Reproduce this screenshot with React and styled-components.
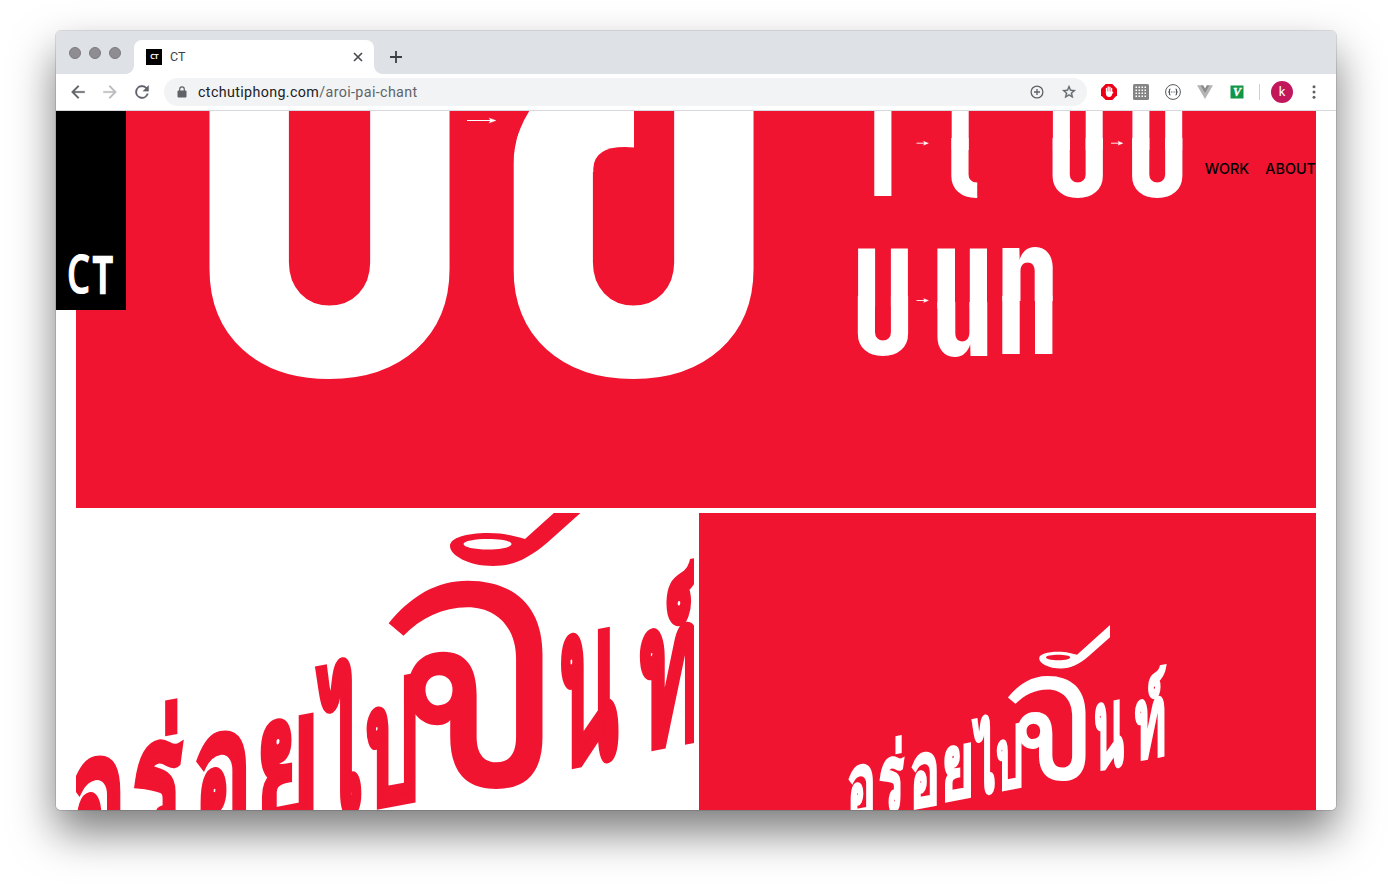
import React from "react";
import styled, { createGlobalStyle } from "styled-components";

const RED = "#f01431";

const GlobalStyle = createGlobalStyle`
  * { box-sizing: border-box; }
  html, body { margin: 0; padding: 0; background: #fff; }
  body { overflow: hidden; font-family: Roboto, "Liberation Sans", sans-serif; }
  svg { display: block; flex: none; }
`;

const Desktop = styled.div`
  width: 1392px;
  height: 890px;
  padding: 31px 56px 80px;
  background: #fff;
  overflow: hidden;
`;

const Window = styled.div`
  display: flex;
  flex-direction: column;
  height: 779px;
  border-radius: 5px;
  box-shadow: 0 0 0 1px rgba(0, 0, 0, 0.12), 0 22px 44px rgba(0, 0, 0, 0.52);
`;

const TabStrip = styled.div`
  display: flex;
  height: 43px;
  padding: 9px 0 0 13px;
  background: #dee1e6;
  border-radius: 5px 5px 0 0;
`;

const Lights = styled.div`
  display: flex;
  gap: 8px;
  width: 57px;
  padding-top: 7px;
`;

const Light = styled.span`
  width: 12px;
  height: 12px;
  border-radius: 50%;
  background: #8f8d92;
  border: 1px solid #7c7a7f;
`;

const TabCurve = styled.span`
  align-self: flex-end;
  width: 8px;
  height: 8px;
  background: radial-gradient(circle at ${(p) => (p.$right ? "100%" : "0")} 0, transparent 7.5px, #fff 8px);
`;

const Tab = styled.div`
  display: flex;
  align-items: center;
  width: 240px;
  height: 34px;
  padding: 0 10px 0 12px;
  border-radius: 8px 8px 0 0;
  background: #fff;
`;

const Favicon = styled.span`
  width: 16px;
  height: 16px;
  margin-right: 8px;
  background: #000;
  color: #eee;
  font: 700 7px/16px "Liberation Sans Narrow", "DejaVu Sans Condensed", sans-serif;
  letter-spacing: -0.6px;
  text-align: center;
`;

const TabTitle = styled.span`
  flex: 1;
  color: #3c4043;
  font-size: 12.5px;
  line-height: 16px;
`;

const NewTab = styled.div`
  padding: 10px 0 0 7px;
`;

const Toolbar = styled.div`
  display: flex;
  align-items: center;
  height: 37px;
  padding: 0 12px 0 12px;
  background: #fff;
  border-bottom: 1px solid #d7d9dc;
`;

const NavButtons = styled.div`
  display: flex;
  gap: 12px;
  width: 96px;
`;

const AddressBar = styled.div`
  display: flex;
  align-items: center;
  width: 923px;
  height: 28px;
  padding: 0 10px 0 12px;
  border-radius: 14px;
  background: #f1f3f4;
`;

const Url = styled.span`
  flex: 1;
  margin-left: 10px;
  font-size: 14.3px;
  line-height: 20px;
  letter-spacing: 0.36px;
  color: #202124;
`;

const UrlPath = styled.span`
  color: #5f6368;
`;

const PageActions = styled.div`
  display: flex;
  gap: 16px;
`;

const Extensions = styled.div`
  display: flex;
  align-items: center;
  gap: 16px;
  margin-left: 14px;
`;

const Divider = styled.span`
  width: 1px;
  height: 16px;
  margin-left: -2px;
  background: #cdd0d4;
`;

const Avatar = styled.span`
  width: 22px;
  height: 22px;
  margin: 0 -5px 0 -5px;
  border-radius: 50%;
  background: #c2185b;
  color: #fff;
  font-size: 13px;
  line-height: 22px;
  text-align: center;
`;

const Viewport = styled.main`
  position: relative;
  display: flex;
  flex-direction: column;
  gap: 5px;
  height: 699px;
  padding: 0 20px;
  background: #fff;
  border-radius: 0 0 5px 5px;
  overflow: hidden;
`;

const Panel = styled.section`
  width: ${(p) => p.$w}px;
  height: ${(p) => p.$h}px;
  background: ${(p) => p.$bg};
  overflow: hidden;
`;

const Gallery = styled.div`
  display: flex;
  justify-content: space-between;
`;

const SiteLogo = styled.a`
  position: absolute;
  left: 0;
  top: 0;
  width: 70px;
  height: 199px;
  background: #000;
`;

const SiteNav = styled.nav`
  position: absolute;
  right: 20px;
  top: 48px;
  display: flex;
  gap: 16px;
`;

const SiteLink = styled.a`
  color: #000;
  font: 500 14.4px/20px Inter, "Liberation Sans", sans-serif;
`;

/* Measures the ink of a string, so that it can be set to an exact box. */
const ctx = document.createElement("canvas").getContext("2d");
function inkOf(text, font, weight) {
  ctx.font = `${weight} 200px ${font}`;
  const m = ctx.measureText(text);
  return {
    left: m.actualBoundingBoxLeft,
    up: m.actualBoundingBoxAscent,
    w: m.actualBoundingBoxLeft + m.actualBoundingBoxRight,
    h: m.actualBoundingBoxAscent + m.actualBoundingBoxDescent,
  };
}

function Letter({ text, x, y, w, h, bold = 0, slope = 0, fill = "#fff", font = "Inter, sans-serif", weight = 900, clipPath }) {
  const ink = inkOf(text, font, weight);
  const sx = (w - bold) / ink.w;
  const sy = (h - bold) / ink.h;
  return (
    <g clipPath={clipPath}>
      <text
        x={ink.left}
        y={ink.up}
        transform={`matrix(${sx} ${slope * sx} 0 ${sy} ${x + bold / 2} ${y + bold / 2})`}
        fontFamily={font}
        fontWeight={weight}
        fontSize="200"
        fill={fill}
        stroke={bold ? fill : "none"}
        strokeWidth={bold}
        vectorEffect="non-scaling-stroke"
      >
        {text}
      </text>
    </g>
  );
}

const Stem = ({ x, y, w, h }) => <rect x={x} y={y} width={w} height={h} fill="#fff" />;

const Arrow = ({ x, y, w }) => (
  <g stroke="#fff" fill="#fff">
    <line x1={x} y1={y} x2={x + w - 3} y2={y} strokeWidth={w > 20 ? 1.1 : 0.9} />
    <path d={w > 20 ? `M${x + w} ${y}l-7-2.6 1.6 2.6-1.6 2.6z` : `M${x + w} ${y}l-5-2 1 2-1 2z`} strokeWidth="0.3" />
  </g>
);

function Specimen() {
  return (
    <svg width="1240" height="397" viewBox="76 111 1240 397">
      <defs>
        <clipPath id="shoulder"><rect x="513.4" y="70" width="400" height="400" rx="90" ry="95" /></clipPath>
        <clipPath id="half"><rect x="940" y="100" width="37.2" height="110" /></clipPath>
      </defs>
      <Letter text="U" x={208.7} y={81} w={241} h={298.500} bold={6} />
      <Arrow x={467} y={120.5} w={29} />
      <g clipPath="url(#shoulder)">
        <Letter text="U" x={512.7} y={81} w={241} h={298.500} bold={6} />
        <Stem x={590} y={90} w={44} h={82} />
      </g>
      <path d="M593.300 168.500Q594 147 625 147L634 147.600V190H593.300Z" fill={RED} />
      <Letter text="l" x={874} y={90} w={17.8} h={106} />
      <Arrow x={916.5} y={143.2} w={12} />
      <Stem x={951.7} y={100} w={17} h={50} />
      <Letter text="U" x={951.3} y={137.7} w={50.4} h={60} bold={2} clipPath="url(#half)" />
      {[1052.5, 1132].map((x) => (
        <g key={x}>
          <Letter text="U" x={x} y={137.7} w={50.4} h={60} bold={2} />
          <Stem x={x + 0.4} y={100} w={17} h={50} />
          <Stem x={x + 33.2} y={100} w={17} h={50} />
        </g>
      ))}
      <Arrow x={1111} y={143.2} w={12} />
      <Letter text="U" x={857.7} y={296.2} w={50.4} h={60} bold={2} />
      <Stem x={858.1} y={248.5} w={17} h={58} />
      <Stem x={890.9} y={248.5} w={17} h={58} />
      <Arrow x={916.5} y={300.5} w={12} />
      <Letter text="u" x={937} y={302} w={50.2} h={54} />
      <Stem x={937.4} y={248.5} w={17.6} h={60} />
      <Stem x={969.8} y={248.5} w={17.2} h={60} />
      <Letter text="n" x={1002} y={247} w={50.6} h={54} />
      <Stem x={1002.3} y={296} w={17.4} h={58} />
      <Stem x={1035} y={296} w={17.4} h={58} />
    </svg>
  );
}

const WORD = [
  ["อ", 70.6, 761, 51, 110, 9],
  ["ร่", 132.7, 707, 51.3, 148, 9],
  ["อ", 195, 736, 52.4, 110, 9],
  ["ย", 260, 722, 55.3, 110, 8],
  ["ไ", 314, 663, 50, 159, 10],
  ["ป", 364.5, 683, 52.6, 128, 8],
  ["จ", 388, 581, 155.5, 208, 0, 0],
  ["น", 558, 636, 62.7, 134, 10],
  ["ท์", 637.7, 568.5, 66, 183.5, 10],
];

function Wordmark({ scale, dx, dy, fill }) {
  return (
    <g>
      {WORD.map(([text, x, y, w, h, bold, slope = -0.19], i) => (
        <Letter
          key={i}
          text={text}
          x={x * scale + dx}
          y={y * scale + dy}
          w={w * scale}
          h={h * scale}
          bold={bold * scale}
          slope={slope}
          fill={fill}
          font={'"Noto Sans", sans-serif'}
          weight={bold ? 400 : 300}
        />
      ))}
      <path
        transform={`translate(${dx} ${dy}) scale(${scale})`}
        fill={fill}
        fillRule="evenodd"
        d="M590.5 480V504L548 542C528 559 513 566 493 566C468 566 450 555 450 546C450 538 466 533 488 533C504 533 514 536 525 539ZM463.500 544C463.500 547 474 549.500 488 549.500S511.500 547 511.500 544S501 539 488 539S463.500 541 463.500 544Z"
      />
    </g>
  );
}

const Icon = ({ size = 20, children, color = "#5f6368", box = 24 }) => (
  <svg width={size} height={size} viewBox={`0 0 ${box} ${box}`} fill={color}>{children}</svg>
);

export default function App() {
  return (
    <>
      <GlobalStyle />
      <Desktop>
        <Window>
          <TabStrip>
            <Lights><Light /><Light /><Light /></Lights>
            <TabCurve />
            <Tab>
              <Favicon>CT</Favicon>
              <TabTitle>CT</TabTitle>
              <Icon size={12} box={12}><path d="M2 2l8 8M10 2l-8 8" stroke="#45484c" strokeWidth="1.6" /></Icon>
            </Tab>
            <TabCurve $right />
            <NewTab><Icon size={14} box={14}><path d="M7 1v12M1 7h12" stroke="#3c4043" strokeWidth="1.8" /></Icon></NewTab>
          </TabStrip>
          <Toolbar>
            <NavButtons>
              <Icon><path d="M20 11H7.830l5.590-5.590L12 4l-8 8 8 8 1.410-1.410L7.830 13H20v-2z" stroke="#5f6368" strokeWidth="0.300" /></Icon>
              <Icon color="#babcbe"><path d="M12 4l-1.410 1.410L16.170 11H4v2h12.170l-5.580 5.590L12 20l8-8z" stroke="#babcbe" strokeWidth="0.300" /></Icon>
              <Icon><path d="M17.650 6.350A8 8 0 1 0 19.730 14h-2.080A6 6 0 1 1 12 6c1.660 0 3.140.690 4.220 1.780L13 11h7V4z" stroke="#5f6368" strokeWidth="0.300" /></Icon>
            </NavButtons>
            <AddressBar>
              <Icon size={12} box={12}>
                <rect x="1.500" y="4.400" width="9" height="7.200" rx="1" />
                <path d="M3.700 5V3.200a2.300 2.300 0 0 1 4.600 0V5" fill="none" stroke="#5f6368" strokeWidth="1.200" />
              </Icon>
              <Url>ctchutiphong.com<UrlPath>/aroi-pai-chant</UrlPath></Url>
              <PageActions>
                <Icon size={16} box={16}>
                  <circle cx="8" cy="8" r="5.900" fill="none" stroke="#5f6368" strokeWidth="1.300" />
                  <path d="M8 5v6M5 8h6" stroke="#5f6368" strokeWidth="1.300" />
                </Icon>
                <Icon size={16}><path d="M22 9.240l-7.190-.620L12 2 9.190 8.630 2 9.240l5.460 4.730L5.820 21 12 17.270 18.180 21l-1.630-7.030L22 9.240zM12 15.400l-3.760 2.270 1-4.280-3.320-2.880 4.380-.380L12 6.100l1.710 4.040 4.380.380-3.320 2.880 1 4.280L12 15.400z" stroke="#5f6368" strokeWidth="0.500" /></Icon>
              </PageActions>
            </AddressBar>
            <Extensions>
              <Icon size={16} box={16}>
                <path d="M4.700 0h6.600L16 4.700v6.600L11.300 16H4.700L0 11.300V4.700z" fill="#eb0017" />
                <path d="M5.500 9V4.500M7.200 8V3M8.900 8V3.200M10.600 9V4.500" stroke="#fff" strokeWidth="1.300" strokeLinecap="round" />
                <path d="M4.900 7.500h6.300v2.300c0 2-1.200 3.200-3.100 3.200S4.900 11.800 4.900 9.800zM11 10.600l1.500-2.300-1-.8z" fill="#fff" />
              </Icon>
              <Icon size={16} box={16}>
                <rect width="16" height="16" rx="1.500" fill="#858585" />
                {[3, 6, 9, 12].map((y) => [3, 6, 9, 12].map((x) => <rect key={`${x}-${y}`} x={x - 0.500} y={y - 0.500} width="1.500" height="1.500" fill="#fff" />))}
              </Icon>
              <Icon size={16} box={16}>
                <circle cx="8" cy="8" r="7.400" fill="none" stroke="#55585b" />
                <path d="M5.500 5Q4.200 5 4.500 6.600T3.300 8Q4.800 8 4.500 9.400T5.500 11M10.500 5Q11.800 5 11.500 6.600T12.700 8Q11.200 8 11.500 9.400T10.500 11" fill="none" stroke="#55585b" strokeWidth="1.200" />
                <path d="M6 8h.9M7.600 8h.9M9.200 8h.9" stroke="#55585b" />
              </Icon>
              <Icon size={16} box={16}>
                <path d="M0 1.200h3.200L8 9.500l4.800-8.300H16L8 15z" fill="#b4b4b4" />
                <path d="M3.200 1.200h3L8 4.400l1.800-3.200h3L8 9.500z" fill="#8a8a8a" />
              </Icon>
              <Icon size={16} box={16}>
                <rect x="1.500" y="1.500" width="13" height="13" fill="#109648" />
                <text x="3.900" y="12.200" fill="#fff" stroke="#fff" strokeWidth="0.400" fontFamily="Liberation Serif, serif" fontWeight="700" fontStyle="italic" fontSize="12">V</text>
              </Icon>
              <Divider />
              <Avatar>k</Avatar>
              <Icon size={20} box={20}>
                <circle cx="10" cy="4.800" r="1.500" /><circle cx="10" cy="10" r="1.500" /><circle cx="10" cy="15.200" r="1.500" />
              </Icon>
            </Extensions>
          </Toolbar>
          <Viewport>
            <Panel $w={1240} $h={397} $bg={RED}><Specimen /></Panel>
            <Gallery>
              <Panel $w={618} $h={297} $bg="#fff">
                <svg width="618" height="297" viewBox="76 513 618 297">
                  <Wordmark scale={1} dx={0} dy={0} fill={RED} />
                </svg>
              </Panel>
              <Panel $w={617} $h={297} $bg={RED}>
                <svg width="617" height="297" viewBox="699 513 617 297">
                  <Wordmark scale={0.504} dx={812.4} dy={383.2} fill="#fff" />
                </svg>
              </Panel>
            </Gallery>
            <SiteLogo>
              <svg width="70" height="199" viewBox="0 0 70 199">
                <Letter text="C" x={12.5} y={144.5} w={21} h={39} font="Open Sans, sans-serif" weight={600} bold={1} />
                <Letter text="T" x={36.3} y={145.3} w={20.7} h={37.700} font="Open Sans, sans-serif" weight={600} bold={2} />
              </svg>
            </SiteLogo>
            <SiteNav>
              <SiteLink>WORK</SiteLink>
              <SiteLink>ABOUT</SiteLink>
            </SiteNav>
          </Viewport>
        </Window>
      </Desktop>
    </>
  );
}
